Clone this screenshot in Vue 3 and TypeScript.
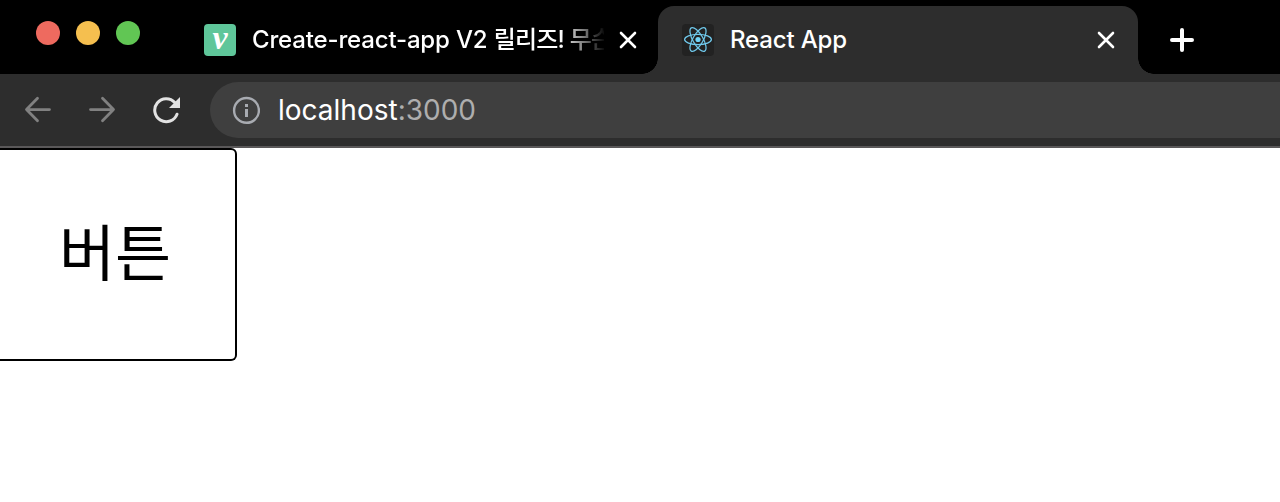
<script setup lang="ts">
import { ref } from 'vue'

const lights = ['#ee6a5f', '#f5bf4f', '#61c654']
const orbits = [0, 60, 120]
const host = ref('localhost')
const port = ref(':3000')
</script>

<template>
  <div class="window">
    <header class="strip">
      <div class="lights">
        <i v-for="c in lights" :key="c" class="light" :style="{ background: c }"></i>
      </div>
      <div class="tab idle">
        <span class="velog">v</span>
        <span class="title long">Create-react-app V2 <span class="ko">릴리즈! 무슨</span></span>
        <svg class="close" width="20" height="20" viewBox="0 0 20 20"><path d="M3 3L17 17M17 3L3 17" /></svg>
      </div>
      <div class="tab active">
        <svg class="react" width="32" height="32" viewBox="0 0 32 32">
          <rect width="32" height="32" rx="4" fill="#222" />
          <g fill="none" stroke="#70c9ec" stroke-width="1.25">
            <ellipse v-for="a in orbits" :key="a" cx="16" cy="15.5" rx="13.4" ry="5.1" :transform="`rotate(${a} 16 15.5)`" />
          </g>
          <circle cx="16" cy="15.5" r="2.6" fill="#70d3f6" />
        </svg>
        <span class="title">React App</span>
        <svg class="close" width="20" height="20" viewBox="0 0 20 20"><path d="M3 3L17 17M17 3L3 17" /></svg>
      </div>
      <svg class="plus" width="24" height="24" viewBox="0 0 24 24"><path d="M12 2V22M2 12H22" /></svg>
    </header>
    <nav class="toolbar">
      <svg class="nav" width="28" height="28" viewBox="0 0 28 28"><path d="M25.5 13.6H2.5M13.5 2.3L2.5 13.6L13.5 24.8" /></svg>
      <svg class="nav" width="28" height="28" viewBox="0 0 28 28"><path d="M2.5 13.6H25.5M14.5 2.3L25.5 13.6L14.5 24.8" /></svg>
      <svg class="reload" width="28" height="28" viewBox="0 0 28 28">
        <path d="M25 18.2A11.5 11.5 0 1 1 22.8 6.5" fill="none" stroke="#e2e2e2" stroke-width="3" stroke-linecap="round" />
        <path d="M28 1V12H17Z" fill="#e2e2e2" />
      </svg>
      <div class="address">
        <svg width="28" height="28" viewBox="0 0 28 28">
          <circle cx="14.5" cy="14.4" r="12.4" fill="none" stroke="#a8abb1" stroke-width="2.4" />
          <path d="M13 8h3v3h-3zM13 13h3v8h-3z" fill="#a8abb1" />
        </svg>
        <span class="url">{{ host }}<span class="port">{{ port }}</span></span>
      </div>
    </nav>
    <main class="page">
      <button class="button" type="button">버튼</button>
    </main>
  </div>
</template>

<style>
body { margin: 0; background: #fff; }
</style>

<style scoped>
.window { width: 1280px; height: 502px; overflow: hidden; background: #fff; font-family: Inter, "Noto Sans CJK KR", sans-serif; }
.strip { display: flex; height: 74px; background: #000; }
.lights { display: flex; gap: 16px; width: 152px; padding: 21px 0 0 36px; box-sizing: border-box; }
.light { width: 24px; height: 24px; border-radius: 50%; }
.tab { display: flex; align-items: center; box-sizing: border-box; height: 68px; margin-top: 6px; }
.idle { width: 470px; margin-left: 36px; padding: 0 20px 0 16px; }
.active { position: relative; width: 480px; padding: 0 22px 0 24px; border-radius: 16px 16px 0 0; background: #2d2d2d; }
.active::before, .active::after { content: ""; position: absolute; bottom: 0; width: 16px; height: 16px; }
.active::before { left: -16px; background: radial-gradient(circle at 0 0, transparent 15.5px, #2d2d2d 16px); }
.active::after { right: -16px; background: radial-gradient(circle at 100% 0, transparent 15.5px, #2d2d2d 16px); }
.velog { width: 32px; height: 32px; border-radius: 4px; background: #5fc69a; color: #fff; font: italic bold 34px/27px "Liberation Serif", serif; text-align: center; }
.title { margin-left: 16px; flex: 1; height: 32px; line-height: 32px; font-size: 24px; font-weight: 450; letter-spacing: -0.16px; color: #fff; white-space: nowrap; }
.long { flex: none; width: 352px; mask-image: linear-gradient(to right, #000 308px, transparent 354px); }
.ko { font-weight: 500; letter-spacing: -0.8px; }
.close { flex: none; margin-left: auto; fill: none; stroke: #fff; stroke-width: 2.6; stroke-linecap: round; }
.plus { margin: 28px 0 0 32px; fill: none; stroke: #fff; stroke-width: 4; stroke-linecap: round; }
.toolbar { display: flex; align-items: center; height: 74px; box-sizing: border-box; border-bottom: 2px solid #5a5859; background: #2d2d2d; padding-left: 24px; }
.nav { margin-right: 36px; fill: none; stroke: #818181; stroke-width: 2.8; stroke-linecap: round; stroke-linejoin: round; }
.reload { margin-right: 30px; }
.address { display: flex; align-items: center; flex: 1; height: 56px; box-sizing: border-box; padding-left: 22px; border-radius: 28px 0 0 28px; background: #3f3f3f; }
.url { margin-left: 18px; font-size: 28px; line-height: 56px; color: #fff; }
.port { color: #aeaeae; }
.button { display: block; width: 237px; height: 213px; box-sizing: border-box; border: 2px solid #000; border-left: 0; border-radius: 0 6px 6px 0; padding: 0 0 9px 59px; background: #fff; color: #000; font: 400 61px/200px "Noto Sans CJK KR", sans-serif; text-align: left; white-space: nowrap; }
</style>
